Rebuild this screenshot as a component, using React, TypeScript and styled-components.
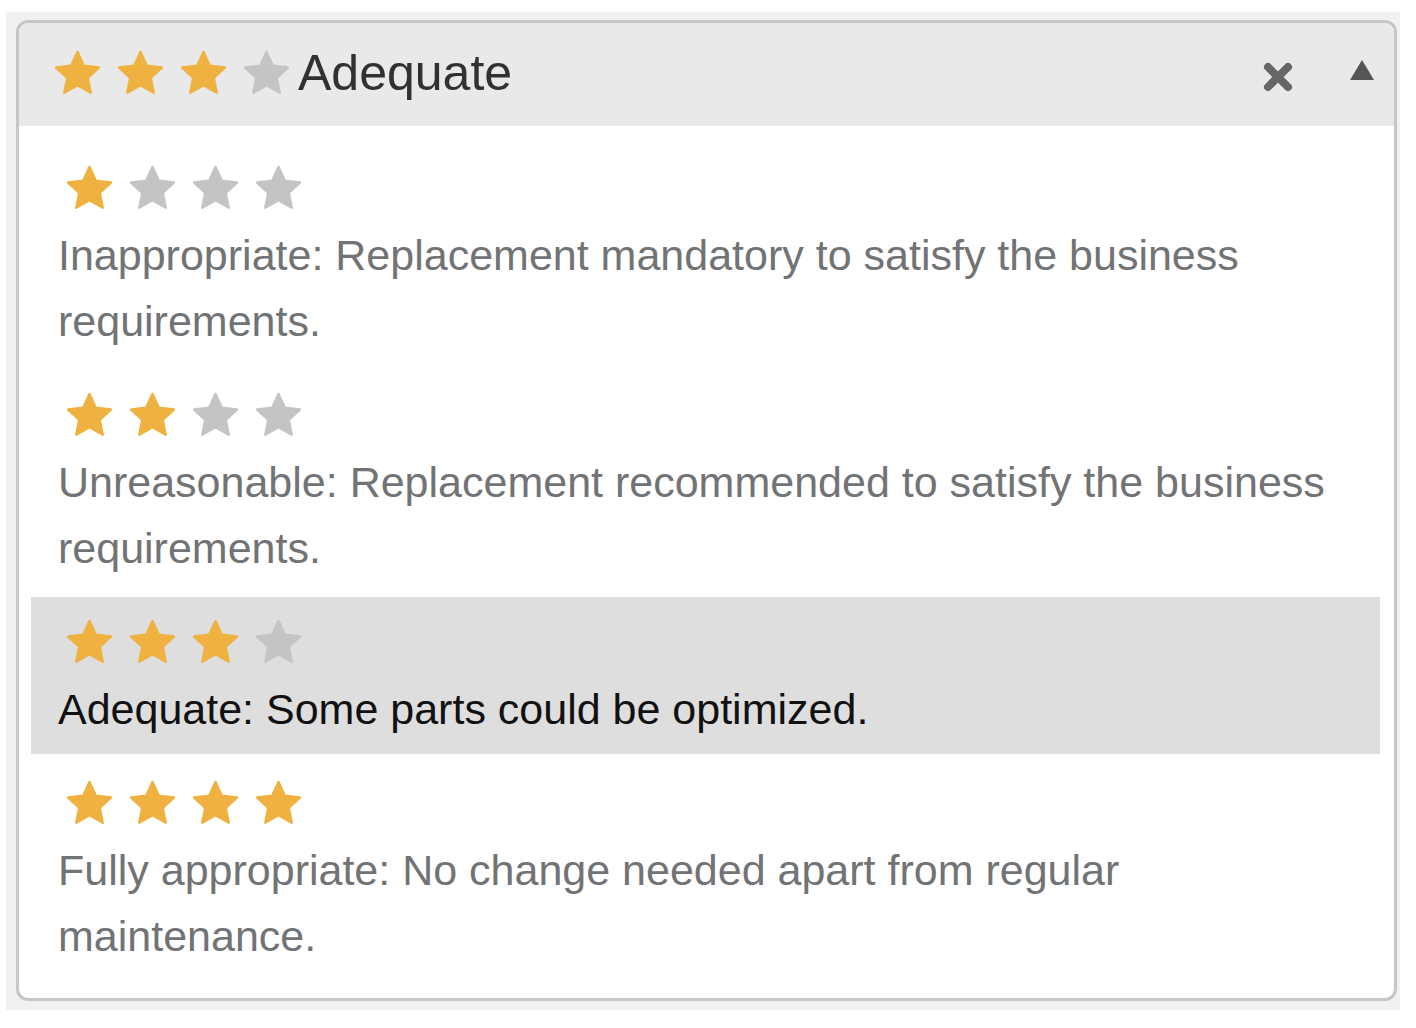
import React from "react";
import styled, { createGlobalStyle } from "styled-components";

const GlobalStyle = createGlobalStyle`
  html, body {
    margin: 0;
    padding: 0;
    background: #fff;
  }
  body {
    font-family: "Liberation Sans", Arial, Helvetica, sans-serif;
  }
`;

const Backdrop = styled.div`
  margin: 12px 16px 0 6px;
  padding: 8px 3px 9px 10px;
  background: #f1f1f1;
`;

const Dropdown = styled.div`
  border: 3px solid #c6c6c6;
  border-radius: 12px;
  background: #fff;
  overflow: hidden;
`;

const Header = styled.div`
  display: flex;
  align-items: center;
  height: 103px;
  box-sizing: border-box;
  padding: 0 20px 4px 35px;
  background: #e9e9e9;
`;

const StarRow = styled.div`
  display: flex;
  align-items: center;
  gap: 16px;
`;

const Selected = styled.span`
  margin-left: 8px;
  font-size: 50px;
  line-height: 1;
  color: #2f3133;
`;

const Close = styled.button`
  margin-left: auto;
  margin-top: 9px;
  padding: 0;
  border: 0;
  background: none;
  cursor: pointer;
  display: flex;
`;

const Toggle = styled.button`
  margin-left: 57px;
  margin-bottom: 5px;
  padding: 0;
  border: 0;
  background: none;
  cursor: pointer;
  display: flex;
`;

const List = styled.ul`
  list-style: none;
  margin: 0;
  padding: 17px 14px 17px 12px;
  display: flex;
  flex-direction: column;
  gap: 4px;
`;

const Option = styled.li<{ $active?: boolean }>`
  padding: 21px 27px 12px;
  background: ${(p) => (p.$active ? "#dedede" : "transparent")};
  color: ${(p) => (p.$active ? "#111" : "#717375")};
  cursor: pointer;
`;

const OptionStars = styled(StarRow)`
  height: 46px;
  margin-bottom: 12px;
  padding-left: 8px;
`;

const Description = styled.p`
  margin: 0;
  font-size: 43px;
  line-height: 66px;
`;

const GOLD = "#efb241";
const GREY = "#c4c4c4";

const starPoints = (outer: number, inner: number) => {
  const pts: string[] = [];
  for (let i = 0; i < 10; i++) {
    const r = i % 2 === 0 ? outer : inner;
    const a = ((-90 + i * 36) * Math.PI) / 180;
    pts.push(`${(r * Math.cos(a)).toFixed(2)},${(r * Math.sin(a)).toFixed(2)}`);
  }
  return pts.join(" ");
};

const STAR = starPoints(23, 11);

const Star = ({ on }: { on: boolean }) => (
  <svg width="47" height="45" viewBox="-24 -24.5 48 45">
    <polygon
      points={STAR}
      fill={on ? GOLD : GREY}
      stroke={on ? GOLD : GREY}
      strokeWidth="2.5"
      strokeLinejoin="round"
    />
  </svg>
);

const Stars = ({ value }: { value: number }) => (
  <>
    {[1, 2, 3, 4].map((n) => (
      <Star key={n} on={n <= value} />
    ))}
  </>
);

const options = [
  { value: 1, text: "Inappropriate: Replacement mandatory to satisfy the business requirements." },
  { value: 2, text: "Unreasonable: Replacement recommended to satisfy the business requirements." },
  { value: 3, text: "Adequate: Some parts could be optimized." },
  { value: 4, text: "Fully appropriate: No change needed apart from regular maintenance." },
];

export default function App() {
  const current = 3;
  return (
    <>
      <GlobalStyle />
      <Backdrop>
        <Dropdown>
          <Header>
            <StarRow>
              <Stars value={current} />
            </StarRow>
            <Selected>Adequate</Selected>
            <Close aria-label="Clear">
              <svg width="30" height="30" viewBox="0 0 30 30">
                <path
                  d="M5 5 L25 25 M25 5 L5 25"
                  stroke="#666"
                  strokeWidth="8"
                  strokeLinecap="round"
                />
              </svg>
            </Close>
            <Toggle aria-label="Collapse">
              <svg width="24" height="20" viewBox="0 0 24 20">
                <polygon points="12,0 24,20 0,20" fill="#555" />
              </svg>
            </Toggle>
          </Header>
          <List>
            {options.map((o) => (
              <Option key={o.value} $active={o.value === current}>
                <OptionStars>
                  <Stars value={o.value} />
                </OptionStars>
                <Description>{o.text}</Description>
              </Option>
            ))}
          </List>
        </Dropdown>
      </Backdrop>
    </>
  );
}
